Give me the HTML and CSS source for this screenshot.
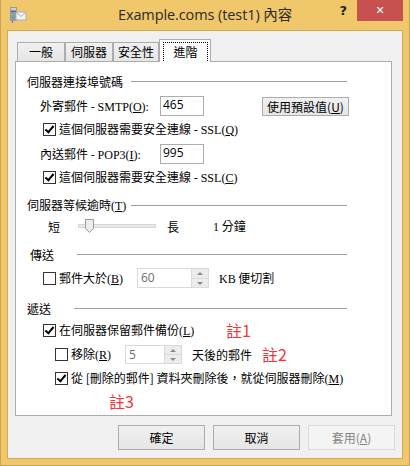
FILE: index.html
```html
<!DOCTYPE html>
<html lang="zh-Hant">
<head>
  <meta charset="UTF-8" />
  <title>Example.coms (test1) 內容</title>
  <link rel="stylesheet" href="styles.css">
</head>
<body>
  <div class="window">
    <div class="titlebar">
      <div class="title-icon">
        <svg width="18" height="18" viewBox="0 0 18 18">
          <rect x="1" y="1" width="7" height="14" fill="#8c9aa6" />
          <rect x="2" y="2" width="5" height="2" fill="#c9d3db" />
          <rect x="2" y="5" width="5" height="1" fill="#5c6b77" />
          <rect x="2" y="8" width="2" height="1" fill="#6fd06f" />
          <rect x="3" y="15" width="1" height="2" fill="#6b7a86" />
          <rect x="7" y="6" width="10" height="8" fill="#f4f4f4" stroke="#a8b0b8" stroke-width="1" />
          <path d="M7.5 6.5 L12 10.5 L16.5 6.5" fill="none" stroke="#a8b0b8" stroke-width="1" />
        </svg>
      </div>
      <div class="title-text">Example.coms (test1) 內容</div>
      <div class="title-controls">
        <span class="help">?</span>
        <span class="close">&#x2715;</span>
      </div>
    </div>

    <div class="client">
      <div class="tabs">
        <div class="tab t1">一般</div>
        <div class="tab t2">伺服器</div>
        <div class="tab t3">安全性</div>
        <div class="tab active"><span class="focus">進階</span></div>
      </div>

      <div class="panel">
        <div class="group-head first">
          <span class="group-label">伺服器連接埠號碼</span>
          <span class="rule rule-130"></span>
        </div>

        <div class="row field">
          <span class="field-label">外寄郵件 - <span class="lat">SMTP(<u>O</u>):</span></span>
          <span class="textbox">465</span>
          <span class="btn small">使用預設值(<u>U</u>)</span>
        </div>

        <div class="row check-row gap3">
          <span class="cb checked"></span>
          <span class="cb-label">這個伺服器需要安全連線 <span class="lat">- SSL(<u>Q</u>)</span></span>
        </div>

        <div class="row field">
          <span class="field-label">內送郵件 - <span class="lat">POP3(<u>I</u>):</span></span>
          <span class="textbox">995</span>
        </div>

        <div class="row check-row gap3">
          <span class="cb checked"></span>
          <span class="cb-label">這個伺服器需要安全連線 <span class="lat">- SSL(<u>C</u>)</span></span>
        </div>

        <div class="group-head gap8">
          <span class="group-label">伺服器等候逾時<span class="lat">(<u>T</u>)</span></span>
          <span class="rule rule-130"></span>
        </div>

        <div class="row slider-row gap1">
          <span class="slider-short">短</span>
          <span class="slider">
            <span class="track"></span>
            <svg class="thumb" width="9" height="14" viewBox="0 0 9 14">
              <path d="M0.5 0.5 H8.5 V9.5 L4.5 13.5 L0.5 9.5 Z" fill="#ececec" stroke="#9a9a9a" />
            </svg>
          </span>
          <span class="slider-long">長</span>
          <span><span class="lat">1</span> 分鐘</span>
        </div>

        <div class="group-head gap8">
          <span class="group-label pad3">傳送</span>
          <span class="rule rule-76"></span>
        </div>

        <div class="row check-row gap4">
          <span class="cb"></span>
          <span class="cb-label w-size">郵件大於<span class="lat">(<u>B</u>)</span></span>
          <span class="spin w-60">
            <span class="spin-val">60</span>
            <span class="spin-btns"><span class="up"></span><span class="down"></span></span>
          </span>
          <span class="after-spin"><span class="lat">KB</span> 便切割</span>
        </div>

        <div class="group-head gap10">
          <span class="group-label">遞送</span>
          <span class="rule rule-73"></span>
        </div>

        <div class="row check-row gap2">
          <span class="cb checked"></span>
          <span class="cb-label w-keep">在伺服器保留郵件備份<span class="lat">(<u>L</u>)</span></span>
          <span class="note">註1</span>
        </div>

        <div class="row check-row sub gap4">
          <span class="cb"></span>
          <span class="cb-label w-remove">移除<span class="lat">(<u>R</u>)</span></span>
          <span class="spin w-5">
            <span class="spin-val">5</span>
            <span class="spin-btns"><span class="up"></span><span class="down"></span></span>
          </span>
          <span class="after-spin w-days">天後的郵件</span>
          <span class="note">註2</span>
        </div>

        <div class="row check-row sub gap4">
          <span class="cb checked"></span>
          <span class="cb-label">從 [刪除的郵件] 資料夾刪除後，就從伺服器刪除<span class="lat">(<u>M</u>)</span></span>
        </div>

        <div class="row note-row">
          <span class="note">註3</span>
        </div>
      </div>

      <div class="buttons">
        <span class="btn big">確定</span>
        <span class="btn big">取消</span>
        <span class="btn big disabled">套用(<u>A</u>)</span>
      </div>
    </div>
  </div>
</body>
</html>
```

FILE: styles.css
```css
body {
  margin: 0;
  padding: 0;
  font-family: "Noto Sans CJK TC", sans-serif;
  font-size: 12px;
  color: #000;
}

.window {
  width: 410px;
  height: 466px;
  box-sizing: border-box;
  background: #f0c86b;
  border: 1px solid #c9a452;
  border-top: 0;
  display: flex;
  flex-direction: column;
}

.titlebar {
  height: 30px;
  display: grid;
  grid-template-columns: 1fr auto 1fr;
  align-items: start;
}

.title-icon {
  padding: 6px 0 0 8px;
}

.title-icon svg {
  display: block;
}

.title-text {
  font-family: "Open Sans", "Noto Sans CJK TC", sans-serif;
  font-size: 14.5px;
  color: #2b2b2b;
  line-height: 30px;
  letter-spacing: -0.1px;
}

.title-controls {
  display: flex;
  justify-content: flex-end;
  align-items: flex-start;
  margin-right: 6px;
}

.help {
  font-family: "DejaVu Sans", sans-serif;
  font-weight: bold;
  font-size: 13px;
  color: #222;
  margin: 3px 10px 0 0;
}

.close {
  width: 46px;
  height: 21px;
  background: #c75050;
  color: #fff;
  font-family: "DejaVu Sans", sans-serif;
  font-weight: bold;
  font-size: 11px;
  text-align: center;
  line-height: 21px;
}

.client {
  flex: 1;
  margin: 0 6px 6px 6px;
  border: 1px solid #d2aa55;
  background: #f0f0f0;
  display: flex;
  flex-direction: column;
}

/* tabs */

.tabs {
  display: flex;
  align-items: flex-end;
  margin: 8px 0 0 9px;
  height: 22px;
  position: relative;
  z-index: 1;
}

.tab {
  box-sizing: border-box;
  height: 19px;
  border: 1px solid #acacac;
  border-bottom: 0;
  background: linear-gradient(#f0f0f0, #e5e5e5);
  text-align: center;
  line-height: 18px;
}

.t1 { width: 48px; }
.t2 { width: 48px; }
.t3 { width: 46px; }

.tab.active {
  width: 52px;
  height: 23px;
  margin-bottom: -1px;
  background: #fff;
  padding: 2px 2px 0 3px;
}

.focus {
  display: block;
  height: 19px;
  border: 1px dotted #000;
  border-bottom: 0;
  box-sizing: border-box;
  line-height: 17px;
}

.panel {
  margin-left: 7px;
  width: 377px;
  height: 355px;
  box-sizing: border-box;
  border: 1px solid #acacac;
  background: #fff;
  padding: 9px 0 0 11px;
}

.lat {
  font-family: "Liberation Serif", serif;
  font-size: 12px;
}

/* rows */

.row {
  display: flex;
  align-items: center;
  height: 20px;
}

.group-head {
  display: flex;
  align-items: center;
  height: 20px;
  padding-right: 44px;
  justify-content: space-between;
}

.group-label.pad3 {
  padding-left: 3px;
}

.rule {
  height: 1px;
  background: #a0a0a0;
}

.rule-130 { width: 216px; }
.rule-76 { width: 270px; }
.rule-73 { width: 273px; }

.gap1 { margin-top: 1px; }
.gap2 { margin-top: 2px; }
.gap3 { margin-top: 3px; }
.gap4 { margin-top: 4px; }
.gap8 { margin-top: 8px; }
.gap10 { margin-top: 10px; }

.field {
  margin-top: 5px;
  padding-left: 13px;
}

.field-label {
  width: 120px;
}

.textbox {
  box-sizing: border-box;
  width: 44px;
  height: 20px;
  border: 1px solid #abadb3;
  background: #fff;
  font-family: "Open Sans", sans-serif;
  font-size: 12px;
  padding-left: 2px;
  line-height: 16px;
}

.btn {
  box-sizing: border-box;
  border: 1px solid #acacac;
  background: linear-gradient(#f0f0f0, #e5e5e5);
  text-align: center;
}

.btn.small {
  width: 87px;
  height: 19px;
  line-height: 17px;
  margin-left: 58px;
}

.check-row {
  padding-left: 16px;
}

.check-row.sub {
  padding-left: 28px;
}

.cb {
  box-sizing: border-box;
  width: 13px;
  height: 13px;
  border: 1px solid #333;
  background: #fff;
  margin-right: 3px;
  position: relative;
}

.cb.checked::after {
  content: "";
  position: absolute;
  left: 3px;
  top: 0px;
  width: 3px;
  height: 7px;
  border: solid #000;
  border-width: 0 2px 2px 0;
  transform: rotate(40deg);
}

.w-size { width: 78px; }
.w-keep { width: 167px; }
.w-remove { width: 54px; }
.w-days { width: 70px; }

.spin {
  box-sizing: border-box;
  height: 20px;
  border: 1px solid #d9d9d9;
  background: #fff;
  display: flex;
  justify-content: space-between;
  align-items: stretch;
}

.spin.w-60 { width: 72px; }
.spin.w-5 { width: 57px; height: 19px; }

.spin-val {
  font-family: "Open Sans", sans-serif;
  color: #6d6d6d;
  padding-left: 3px;
  line-height: 17px;
}

.spin-btns {
  width: 16px;
  display: flex;
  flex-direction: column;
  border-left: 1px solid #d9d9d9;
}

.spin-btns span {
  flex: 1;
  background: #ececec;
  position: relative;
}

.spin-btns .up {
  border-bottom: 1px solid #d9d9d9;
}

.spin-btns .up::after,
.spin-btns .down::after {
  content: "";
  position: absolute;
  left: 5px;
  width: 0;
  height: 0;
  border-left: 3px solid transparent;
  border-right: 3px solid transparent;
}

.spin-btns .up::after {
  top: 3px;
  border-bottom: 3px solid #8a8a8a;
}

.spin-btns .down::after {
  top: 3px;
  border-top: 3px solid #8a8a8a;
}

.after-spin {
  margin-left: 10px;
}

.note {
  font-family: "Noto Sans CJK TC", sans-serif;
  font-size: 16px;
  color: #f5333b;
}

.note-row {
  margin-top: 3px;
  padding-left: 82px;
}

/* slider */

.slider-row {
  padding-left: 21px;
}

.slider {
  margin-left: 18px;
  width: 78px;
  height: 14px;
  position: relative;
  display: flex;
  align-items: center;
}

.track {
  display: block;
  width: 78px;
  height: 4px;
  box-sizing: border-box;
  background: #e7eaea;
  border: 1px solid #d6d6d6;
}

.thumb {
  position: absolute;
  left: 7px;
  top: 0;
}

.slider-long {
  margin-left: 11px;
  width: 46px;
}

/* bottom buttons */

.buttons {
  display: flex;
  justify-content: flex-end;
  gap: 8px;
  margin: 9px 7px 0 0;
}

.btn.big {
  width: 87px;
  height: 25px;
  line-height: 23px;
  background: linear-gradient(#f0f0f0, #e5e5e5);
}

.btn.disabled {
  border-color: #d9d9d9;
  background: #f4f4f4;
  color: #838383;
}
```
